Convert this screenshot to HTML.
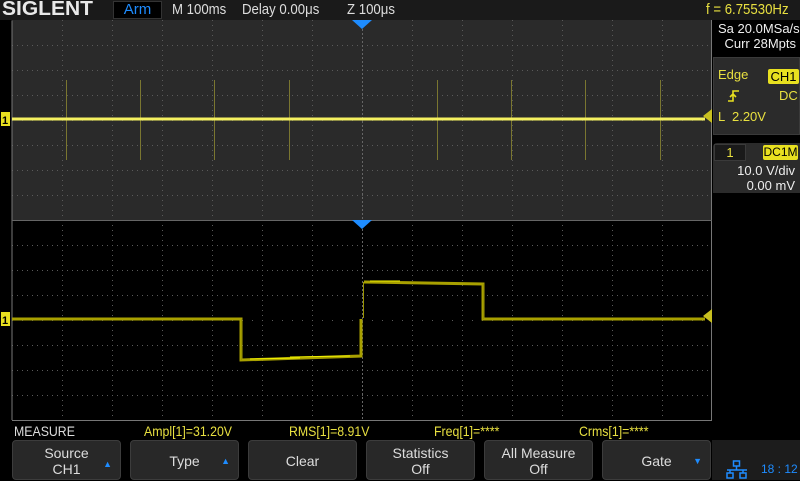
<!DOCTYPE html>
<html><head><meta charset="utf-8"><style>
*{margin:0;padding:0;box-sizing:border-box}
body{width:800px;height:480px;background:#000;overflow:hidden;position:relative;font-family:"Liberation Sans",sans-serif;color:#ddd}
.a{position:absolute;white-space:nowrap}
.n{transform:scaleX(0.88);transform-origin:left}
.btn{position:absolute;top:440px;width:109px;height:40px;background:#282828;border:1px solid #3c3c3c;border-radius:4px;color:#ddd;font-size:14px;text-align:center;line-height:16px}
.arr{position:absolute;right:8px;color:#1e8cff;font-size:9px}
</style></head><body>
<div class="a" style="left:0;top:0;width:800px;height:20px;background:#1a1a1a"></div>
<div class="a" style="left:2px;top:-2px;font-size:20px;font-weight:bold;color:#e8e8e8;transform:scaleX(1.05);transform-origin:left">SIGLENT</div>
<div class="a" style="left:113px;top:1px;width:49px;height:18px;background:#000;border:1px solid #333;color:#1e8cff;font-size:15px;text-align:center;line-height:16px">Arm</div>
<div class="a n" style="left:172px;top:1px;font-size:15px;color:#ddd">M 100ms</div>
<div class="a n" style="left:242px;top:1px;font-size:15px;color:#ddd">Delay 0.00μs</div>
<div class="a n" style="left:347px;top:1px;font-size:15px;color:#ddd">Z 100μs</div>
<div class="a n" style="left:706px;top:1px;font-size:15px;color:#e8e040">f = 6.75530Hz</div>

<svg class="a" style="left:0;top:20px" width="712" height="402">
<rect x="12" y="0" width="700" height="200" fill="#2a2a2a"/>
<rect x="12" y="200" width="700" height="200" fill="#000"/>
<g stroke="#5a5a5a" stroke-width="1" stroke-dasharray="1,4">
<path d="M62.5 0V400M112.5 0V400M162.5 0V400M212.5 0V400M262.5 0V400M312.5 0V400M412.5 0V400M462.5 0V400M512.5 0V400M562.5 0V400M612.5 0V400M662.5 0V400"/>
<path d="M12 25.5H712M12 50.5H712M12 75.5H712M12 125.5H712M12 150.5H712M12 175.5H712M12 225.5H712M12 250.5H712M12 275.5H712M12 325.5H712M12 350.5H712M12 375.5H712"/>
<path d="M12 100.5H712M12 300.5H712" stroke-dasharray="1,9"/>
</g>
<path d="M362.5 5V400" stroke="#666" stroke-dasharray="2,2"/>
<path d="M12 0.5V400M711.5 0V400.5H12" stroke="#777" fill="none"/>
<path d="M12 200.5H712" stroke="#666"/>
<g stroke="#7a7630" stroke-width="1">
<path d="M66.5 60V140M140.5 60V140M214.5 60V140M289.5 60V140M437.5 60V140M511.5 60V140M585.5 60V140M660.5 60V140"/>
</g>
<path d="M12 99H705" stroke="#f4f060" stroke-width="3"/>
<g fill="none" stroke="#a8a000" stroke-width="3">
<path d="M12 299H241V340L361 336V299"/>
<path d="M364 262L483 264V299H705"/>
</g>
<path d="M241.5 299V340M363.5 298V262M483.5 264V299" stroke="#9a9400" stroke-width="1"/>
<path d="M250 339L300 338M370 261L400 261M290 337L350 336" stroke="#f0f000" stroke-width="1"/>
<path d="M352 0h20l-10 9z M352 200h20l-10 9z" fill="#1e8cff"/>
<path d="M712 89v14l-9 -7z M712 289v14l-9 -7z" fill="#c8c020"/>
<rect x="1" y="92" width="9" height="14" fill="#e8e020"/><text x="2" y="104" font-size="11" font-weight="bold" fill="#000">1</text>
<rect x="1" y="292" width="9" height="14" fill="#e8e020"/><text x="2" y="304" font-size="11" font-weight="bold" fill="#000">1</text>
</svg>

<div class="a" style="left:713px;top:20px;width:87px;height:37px;background:#000"></div>
<div class="a" style="left:718px;top:21px;font-size:13px;color:#eee;line-height:15px;text-align:right;width:78px">Sa 20.0MSa/s<br>Curr 28Mpts</div>
<div class="a" style="left:713px;top:57px;width:87px;height:78px;background:#2b2b2b;border:1px solid #3a3a3a"></div>
<div class="a" style="left:718px;top:67px;font-size:13px;color:#e8e040">Edge</div>
<div class="a" style="left:768px;top:69px;width:31px;height:15px;background:#e8e020;border-radius:2px;color:#000;font-size:13px;text-align:center;line-height:15px">CH1</div>
<svg class="a" style="left:727px;top:89px" width="14" height="14"><path d="M1 12H6V2H12M3 8l3-3 3 3" stroke="#e8e020" stroke-width="1.6" fill="none"/></svg>
<div class="a" style="left:779px;top:88px;font-size:13px;color:#e8e040">DC</div>
<div class="a" style="left:718px;top:109px;font-size:13px;color:#e8e040">L &nbsp;2.20V</div>
<div class="a" style="left:713px;top:143px;width:87px;height:50px;background:#2b2b2b;border-radius:4px 0 0 0"></div>
<div class="a" style="left:714px;top:144px;width:32px;height:17px;background:#1a1a1a;border:1px solid #3a3a3a;color:#e8e040;font-size:13px;text-align:center;line-height:15px">1</div>
<div class="a" style="left:763px;top:145px;width:35px;height:15px;background:#e8e020;border-radius:2px;color:#000;font-size:12px;text-align:center;line-height:15px">DC1M</div>
<div class="a" style="left:716px;top:163px;font-size:13px;color:#eee;line-height:15px;text-align:right;width:79px">10.0 V/div<br>0.00 mV</div>

<div class="a n" style="left:14px;top:423px;font-size:14px;color:#ddd">MEASURE</div>
<div class="a n" style="left:144px;top:423px;font-size:14px;color:#e8e040">Ampl[1]=31.20V</div>
<div class="a n" style="left:289px;top:423px;font-size:14px;color:#e8e040">RMS[1]=8.91V</div>
<div class="a n" style="left:434px;top:423px;font-size:14px;color:#e8e040">Freq[1]=****</div>
<div class="a n" style="left:579px;top:423px;font-size:14px;color:#e8e040">Crms[1]=****</div>

<div class="btn" style="left:12px;padding-top:4px">Source<br>CH1<span class="arr" style="top:15px">▲</span></div>
<div class="btn" style="left:130px;line-height:40px">Type<span class="arr" style="top:0">▲</span></div>
<div class="btn" style="left:248px;line-height:40px">Clear</div>
<div class="btn" style="left:366px;padding-top:4px">Statistics<br>Off</div>
<div class="btn" style="left:484px;padding-top:4px">All Measure<br>Off</div>
<div class="btn" style="left:602px;line-height:40px">Gate<span class="arr" style="top:0">▼</span></div>
<div class="a" style="left:712px;top:440px;width:88px;height:40px;background:#1c1c1c"></div>
<svg class="a" style="left:726px;top:460px" width="22" height="20"><g stroke="#1e8cff" fill="none" stroke-width="1.5"><rect x="7.5" y="1" width="6" height="5"/><rect x="1" y="13" width="6" height="5"/><rect x="14" y="13" width="6" height="5"/><path d="M10.5 6v4M4 13v-3h13v3M1 10h20"/></g></svg>
<div class="a" style="left:761px;top:462px;font-size:12px;color:#1e8cff">18 : 12</div>
</body></html>
